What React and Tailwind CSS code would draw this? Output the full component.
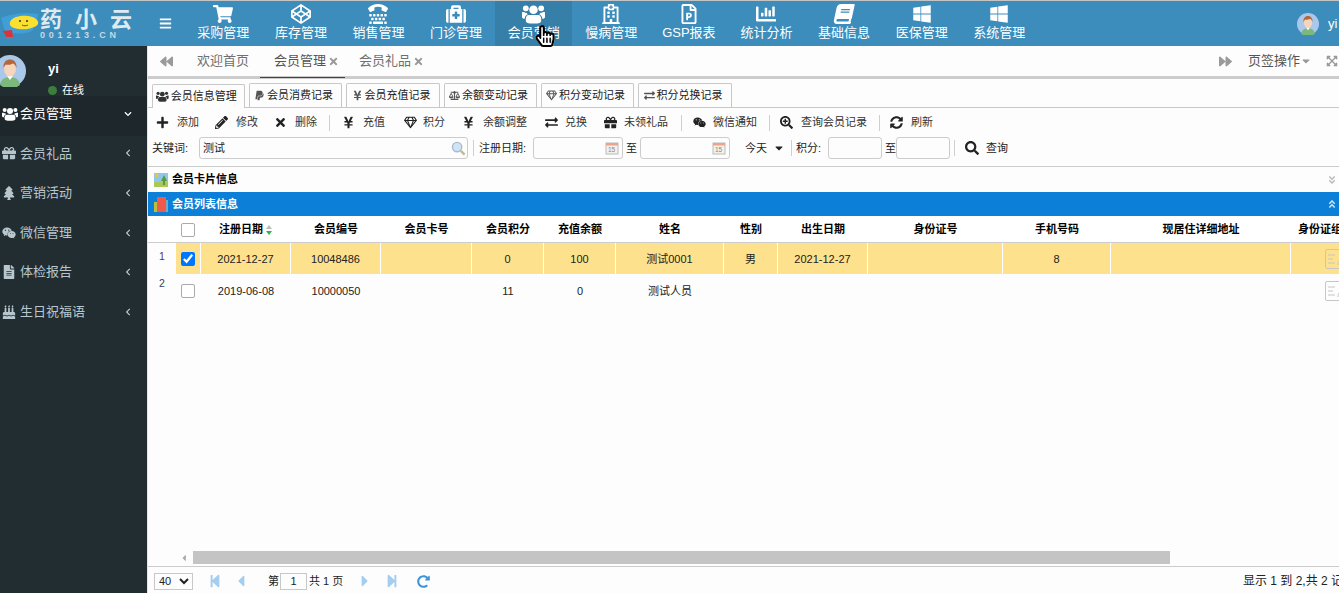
import {
  FaBackward, FaBalanceScale, FaBars, FaBirthdayCake, FaBook, FaCaretDown, FaChartBar, FaChevronDown, FaChevronLeft,
  FaCodepen, FaExchangeAlt, FaExpandArrowsAlt, FaFileAlt, FaForward, FaGift, FaHandPointer, FaMedkit, FaPaypal,
  FaPencilAlt, FaPlus, FaRegFilePowerpoint, FaRegGem, FaRegHandPointer, FaRegHospital, FaSearch, FaSearchPlus,
  FaShoppingCart, FaStepBackward, FaStepForward, FaSyncAlt, FaTimes, FaTree, FaTty, FaWeixin, FaWindows,
  FaYenSign, FaCaretLeft, FaCaretRight, FaRedoAlt, FaAngleDoubleDown, FaAngleDoubleUp,
} from 'react-icons/fa';

// 原图的 users 图标比 fa5 的更高,自己画
function UsersIcon({ className }) {
  return (
    <svg viewBox="0 0 24 20" fill="currentColor" width="1.150em" height="1em" className={className}>
      <circle cx="12" cy="5.500" r="4.500" />
      <circle cx="4" cy="4" r="3" />
      <circle cx="20" cy="4" r="3" />
      <path d="M7 11h10c2 0 3 2 3 4v2c0 2-2 3-8 3s-8-1-8-3v-2c0-2 1-4 3-4z" />
      <path d="M0 8.500C0 8 1 8 2 8c1 .8 2 1 3 1 .3.6.6 1 1 1.300-2 .8-3 2.500-3.200 4.700C1 15 0 14 0 13z" />
      <path d="M24 8.500c0-.5-1-.5-2-.5-1 .8-2 1-3 1-.3.6-.6 1-1 1.300 2 .8 3 2.500 3.200 4.700C23 15 24 14 24 13z" />
    </svg>
  );
}

function SlantBook({ className }) {
  return <FaBook className={`${className} -skew-x-12`} />;
}

const navItems = [
  ['采购管理', FaShoppingCart], ['库存管理', FaCodepen], ['销售管理', FaTty], ['门诊管理', FaMedkit],
  ['会员营销', UsersIcon], ['慢病管理', FaRegHospital], ['GSP报表', FaRegFilePowerpoint], ['统计分析', FaChartBar],
  ['基础信息', SlantBook], ['医保管理', FaWindows], ['系统管理', FaWindows],
];

const sideItems = [
  ['会员管理', UsersIcon], ['会员礼品', FaGift], ['营销活动', FaTree],
  ['微信管理', FaWeixin], ['体检报告', FaFileAlt], ['生日祝福语', FaBirthdayCake],
];

const subTabs = [
  ['会员信息管理', UsersIcon, 'w-[93px]', 'ml-0'], ['会员消费记录', FaPaypal, 'w-[93px]', 'ml-[4px]'],
  ['会员充值记录', FaYenSign, 'w-[94px]', 'ml-[4px]'], ['余额变动记录', FaBalanceScale, 'w-[93px]', 'ml-[4px]'],
  ['积分变动记录', FaRegGem, 'w-[93px]', 'ml-[4px]'], ['积分兑换记录', FaExchangeAlt, 'w-[94px]', 'ml-[4px]'],
];

const tools = [
  { t: '添加', I: FaPlus, cls: 'ml-0', gap: 'gap-[8px]' },
  { t: '修改', I: FaPencilAlt, cls: 'ml-[15px]', gap: 'gap-[8px]' },
  { t: '删除', I: FaTimes, cls: 'ml-[15px]', gap: 'gap-[8px]' },
  { sep: true, cls: 'ml-[12px] mr-[11px]' },
  { t: '充值', I: FaYenSign, cls: 'ml-0', gap: 'gap-[8px]' },
  { t: '积分', I: FaRegGem, cls: 'ml-[18px]', gap: 'gap-[6px]' },
  { t: '余额调整', I: FaYenSign, cls: 'ml-[16px]', gap: 'gap-[8px]' },
  { t: '兑换', I: FaExchangeAlt, cls: 'ml-[17px]', gap: 'gap-[7px]' },
  { t: '未领礼品', I: FaGift, cls: 'ml-[16px]', gap: 'gap-[7px]' },
  { sep: true, cls: 'ml-[13px] mr-[10px]' },
  { t: '微信通知', I: FaWeixin, cls: 'ml-0', gap: 'gap-[7px]' },
  { sep: true, cls: 'ml-[12px] mr-[9px]' },
  { t: '查询会员记录', I: FaSearchPlus, cls: 'ml-0', gap: 'gap-[8px]' },
  { sep: true, cls: 'ml-[12px] mr-[9px]' },
  { t: '刷新', I: FaSyncAlt, cls: 'ml-0', gap: 'gap-[8px]' },
];

const gridCols = 'grid grid-cols-[28px_25px_90px_90px_91px_72px_72px_108px_54px_90px_135px_108px_180px_92px]';
const headers = ['会员编号', '会员卡号', '会员积分', '充值余额', '姓名', '性别', '出生日期', '身份证号', '手机号码', '现居住详细地址'];
const row1 = ['2021-12-27', '10048486', '', '0', '100', '测试0001', '男', '2021-12-27', '', '8', ''];
const row2 = ['2019-06-08', '10000050', '', '11', '0', '测试人员', '', '', '', '', ''];

function Avatar({ className }) {
  return (
    <svg viewBox="0 0 32 32" className={className}>
      <circle cx="16" cy="16" r="16" fill="#a9c8ea" />
      <path d="M6 30c1-6 5-8 10-8s9 2 10 8a16 16 0 0 1-20 0z" fill="#7cb87c" />
      <path d="M13 21h6l-3 4z" fill="#fff" />
      <ellipse cx="16" cy="14" rx="6" ry="7.500" fill="#f6d5bd" />
      <path d="M9.500 13c-.5-6 3-8.500 6.500-8.500s7 2.500 6.500 8.500c-1-3-2.500-4-3.500-4.500-2 1.500-6 1.500-7 1-1 .8-2 2-2.500 3.500z" fill="#b5673c" />
    </svg>
  );
}

function Logo() {
  return (
    <div className="w-[147px] h-full shrink-0 flex items-center overflow-hidden">
      <svg viewBox="0 0 40 30" className="w-[40px] h-[30px] mt-[4px] shrink-0">
        <path d="M1 7C10 3 26 1 38 3l-1 8-5 9c-8 3-14 3-18 2l-3 4-4 1z" fill="#3f9fd8" />
        <path d="M10 11c2-5 10-7 18-6 7 1 11 4 10 8-2 4-12 6-20 5-6-1-9-3-8-7z" fill="#fbe02f" />
        <circle cx="20" cy="10" r="1" fill="#333" />
        <circle cx="27" cy="10" r="1" fill="#333" />
        <path d="M28 14c-2 1-4 1-6 0" stroke="#333" strokeWidth=".8" fill="none" />
        <path d="M2 20l10-1 1 7-7 0-1-3z" fill="#d8343a" />
      </svg>
      <div className="flex flex-col items-start">
        <div className="text-[22px] leading-[23px] font-bold text-[#dfeaf1] tracking-[13px] whitespace-nowrap">药小云</div>
        <div className="text-[9px] leading-[9px] font-bold text-[#c5d8e4] tracking-[3.800px] whitespace-nowrap">001213.CN</div>
      </div>
    </div>
  );
}

function TopBar() {
  return (
    <div className="h-[46px] shrink-0 border-t border-[#c4c4c4] bg-[#3c8dbc] flex text-white relative">
      <Logo />
      <div className="w-[37.500px] shrink-0 flex items-center justify-center">
        <FaBars className="text-[13px]" />
      </div>
      {navItems.map(([label, Icon], i) => (
        <div key={label} className={`w-[77.600px] shrink-0 flex flex-col items-center pt-[3px] ${i === 4 ? 'bg-[#367fa9]' : ''}`}>
          <Icon className="text-[20px] h-[20px]" />
          <span className="text-[13px] leading-[17px] whitespace-nowrap">{label}</span>
        </div>
      ))}
      <div className="ml-auto flex items-center">
        <Avatar className="w-[22px] h-[22px]" />
        <span className="text-[13px] ml-[9px] w-[11px] overflow-hidden">yi</span>
      </div>
      {/* 鼠标指针 */}
      <div className="absolute left-[535px] top-[24px] w-[20px] h-[22px]">
        <FaHandPointer className="absolute inset-0 w-[20px] h-[22px] text-white" />
        <FaRegHandPointer className="absolute inset-0 w-[20px] h-[22px] text-black" />
      </div>
    </div>
  );
}

function Sidebar() {
  return (
    <div className="w-[147px] shrink-0 bg-[#222d32] text-[#b8c7ce]">
      <div className="h-[50px] relative">
        <Avatar className="absolute left-[-6px] top-[9px] w-[32px] h-[32px]" />
        <div className="absolute left-[48px] top-[15px] text-white font-bold text-[13px] leading-[16px]">yi</div>
        <div className="absolute left-[48px] top-[37px] flex items-center text-white text-[11px] leading-[14px]">
          <span className="w-[9px] h-[9px] rounded-full bg-[#3d7d3d] mr-[5px]" />在线
        </div>
      </div>
      {sideItems.map(([label, Icon], i) => (
        <div key={label} className={`h-[39.600px] flex items-center pl-[2px] pr-[15px] pb-[4px] ${i === 0 ? 'bg-[#1e282c] text-white' : ''}`}>
          <span className="w-[18px] shrink-0"><Icon className="text-[14px]" /></span>
          <span className="text-[13px] whitespace-nowrap">{label}</span>
          {i === 0 ? <FaChevronDown className="ml-auto text-[8px]" /> : <FaChevronLeft className="ml-auto text-[8px]" />}
        </div>
      ))}
    </div>
  );
}

function TabBar() {
  return (
    <div className="h-[33px] shrink-0 border-b-[3px] border-[#cccccc] flex items-center text-[13px] text-[#6f6f6f] relative">
      <FaBackward className="ml-[12px] text-[13px] text-[#9a9a9a]" />
      <span className="ml-[24px]">欢迎首页</span>
      <span className="ml-[25px] text-[#555]">会员管理</span>
      <FaTimes className="ml-[2px] text-[11px] text-[#999]" />
      <span className="ml-[20px]">会员礼品</span>
      <FaTimes className="ml-[2px] text-[11px] text-[#999]" />
      <div className="absolute left-[112px] bottom-[-2px] w-[85px] h-px bg-[#2f4661]" />
      <FaForward className="ml-auto text-[13px] text-[#9a9a9a]" />
      <span className="ml-[16px] text-[#555]">页签操作</span>
      <FaCaretDown className="text-[12px] text-[#999]" />
      <FaExpandArrowsAlt className="ml-[14px] mr-px text-[12px] text-[#999]" />
    </div>
  );
}

function SubTabs() {
  return (
    <div className="h-[28px] shrink-0 flex items-end pl-[4px] border-b border-[#c8c8c8] text-[11px] text-[#222]">
      {subTabs.map(([label, Icon, w, ml], i) => (
        <div
          key={label}
          className={`${w} ${ml} h-[24px] pr-[4px] flex items-center justify-center gap-[2px] border border-b-0 border-[#c8c8c8] rounded-t-[2px] whitespace-nowrap ${i === 0 ? 'bg-[#fdfdfd] relative top-px' : ''}`}
        >
          <Icon className={`text-[11px] ${i === 0 ? 'text-[#333]' : 'text-[#555]'}`} />
          {label}
        </div>
      ))}
    </div>
  );
}

function Toolbar() {
  return (
    <div className="h-[29px] shrink-0 flex items-center pl-[7px] text-[11px] text-[#333]">
      {tools.map((item, i) =>
        item.sep ? (
          <span key={i} className={`w-px h-[16px] bg-[#cfcfcf] ${item.cls}`} />
        ) : (
          <span key={i} className={`flex items-center whitespace-nowrap ${item.gap} ${item.cls}`}>
            <span className="w-[14px] flex justify-center text-[#222]"><item.I className="text-[13px]" /></span>
            {item.t}
          </span>
        )
      )}
    </div>
  );
}

function CalendarIcon() {
  return (
    <svg viewBox="0 0 14 14" className="w-[14px] h-[14px] absolute right-[3px] top-[3px]">
      <rect x="1" y="2" width="12" height="11" fill="#f4f1ec" stroke="#bbb" />
      <rect x="1" y="2" width="12" height="2.500" fill="#eda28a" />
      <text x="3" y="11" fontSize="6.500" fill="#888" fontFamily="Liberation Sans">15</text>
    </svg>
  );
}

function Input({ w, ml, children, value }) {
  return (
    <div className={`${w} ${ml} h-[22px] shrink-0 border border-[#cccccc] rounded-[3px] bg-[#fdfdfd] relative flex items-center pl-[3px] text-[11px]`}>
      {value}
      {children}
    </div>
  );
}

function SearchRow() {
  const sep = 'w-px h-[16px] bg-[#cfcfcf] shrink-0';
  return (
    <div className="h-[30px] shrink-0 border-b border-[#cccccc] pb-[7px] flex items-center pl-[4px] text-[11px] text-[#222] whitespace-nowrap">
      <span className="w-[47px] shrink-0">关键词:</span>
      <Input w="w-[269px]" ml="ml-0" value="测试">
        <svg viewBox="0 0 16 16" className="w-[15px] h-[15px] absolute right-[1px] top-[3px]">
          <circle cx="6.500" cy="6.500" r="5" fill="#cfe4f5" stroke="#a9bccb" strokeWidth="1.500" />
          <path d="M10.500 10.500l4 4" stroke="#c9b98a" strokeWidth="2.500" />
        </svg>
      </Input>
      <span className={`${sep} ml-[5px]`} />
      <span className="ml-[5px] w-[54px] shrink-0">注册日期:</span>
      <Input w="w-[90px]" ml="ml-0"><CalendarIcon /></Input>
      <span className="ml-[3px] w-[14px] shrink-0">至</span>
      <Input w="w-[90px]" ml="ml-0"><CalendarIcon /></Input>
      <span className="ml-[15px]">今天</span>
      <FaCaretDown className="ml-[6px] text-[12px] text-[#222]" />
      <span className={`${sep} ml-[6px]`} />
      <span className="ml-[4px] w-[32px] shrink-0">积分:</span>
      <Input w="w-[54px]" ml="ml-0" />
      <span className="ml-[3px] w-[11px] shrink-0">至</span>
      <Input w="w-[54px]" ml="ml-0" />
      <span className={`${sep} ml-[4px]`} />
      <FaSearch className="ml-[10px] text-[14px] text-[#222]" />
      <span className="ml-[7px]">查询</span>
    </div>
  );
}

function SectionBars() {
  return (
    <>
      <div className="h-[25px] shrink-0 flex items-center pl-[6px] pr-[2px] text-[11px] font-bold text-black">
        <svg viewBox="0 0 14 14" className="w-[14px] h-[14px] mr-[4px]">
          <rect width="14" height="14" fill="#8cc8ec" />
          <rect y="9" width="14" height="5" fill="#a8c85a" />
          <circle cx="2.500" cy="2.500" r="2" fill="#f3c23c" />
          <path d="M10 2l3 6h-2v4H9V8H7z" fill="#5a9a3a" />
        </svg>
        会员卡片信息
        <FaAngleDoubleDown className="ml-auto text-[10px] text-[#bbb]" />
      </div>
      <div className="h-[24px] shrink-0 bg-[#0c80d8] flex items-center pl-[6px] pr-[2px] text-[11px] font-bold text-white">
        <svg viewBox="0 0 14 15" className="w-[14px] h-[15px] mr-[4px]">
          <rect x="0" y="5" width="3" height="10" fill="#b5c23a" />
          <rect x="3" y="0" width="9" height="15" fill="#ef5a4a" />
          <rect x="12" y="3" width="2" height="12" fill="#7aa8c8" />
        </svg>
        会员列表信息
        <FaAngleDoubleUp className="ml-auto text-[10px] text-[#cfe4f5]" />
      </div>
    </>
  );
}

function IdCardIcon({ className }) {
  return (
    <svg viewBox="0 0 27 20" className={className} fill="none" stroke="#c6c6c6">
      <rect x="0.500" y="0.500" width="26" height="19" rx="1.500" />
      <path d="M3 6h7M3 10h5M3 14h7M13 16c0-4 1-5 4-5s4 1 4 5M17 4a2.500 2.500 0 1 0 .01 0" />
    </svg>
  );
}

const emptyBox = 'appearance-none w-[14px] h-[14px] border-[1.5px] border-[#aaaaaa] rounded-[2px] bg-white';

function DataRow({ no, cells, checked, h, numCls, textCls }) {
  const cellBg = checked ? 'bg-[#fee18c] border-r border-white' : '';
  return (
    <div className={`${gridCols} ${h} text-[11px] text-[#222]`}>
      <div className={`text-[10.500px] pl-[11px] leading-[14px] ${numCls}`}>{no}</div>
      <div className={`${cellBg} flex items-center justify-center pr-px`}>
        {checked
          ? <input type="checkbox" checked readOnly className="w-[14px] h-[14px]" />
          : <input type="checkbox" checked={false} readOnly className={emptyBox} />}
      </div>
      {cells.map((c, i) => (
        <div key={i} className={`${cellBg} ${textCls} flex items-center justify-center whitespace-nowrap`}>{c}</div>
      ))}
      <div className={`${cellBg} flex items-center pl-[34px]`}>
        <IdCardIcon className="w-[27px] h-[20px] shrink-0" />
      </div>
    </div>
  );
}

function DataTable() {
  return (
    <div className="flex-1 min-h-0 overflow-hidden">
      <div className={`${gridCols} h-[27px] pt-px border-b border-[#cccccc] bg-white text-[11px] font-bold text-black`}>
        <div />
        <div className="flex items-center justify-center pr-px">
          <input type="checkbox" checked={false} readOnly className={emptyBox} />
        </div>
        <div className="flex items-center justify-center whitespace-nowrap">
          注册日期
          <svg viewBox="0 0 8 10" className="w-[8px] h-[10px] ml-[2px]">
            <path d="M4 0l3 4H1z" fill="#bbb" />
            <path d="M4 10L1 6h6z" fill="#2fb344" />
          </svg>
        </div>
        {headers.map((h) => (
          <div key={h} className="flex items-center justify-center whitespace-nowrap">{h}</div>
        ))}
        <div className="flex items-center pl-[7px] whitespace-nowrap">身份证组图</div>
      </div>
      <DataRow no="1" cells={row1} checked h="h-[31px]" numCls="pt-[6px] text-[#5b2d7a]" textCls="pt-[2px]" />
      <DataRow no="2" cells={row2} checked={false} h="h-[34px]" numCls="pt-[2px] text-[#34406b]" textCls="" />
    </div>
  );
}

function Pager() {
  return (
    <div className="h-[27px] shrink-0 border-t border-[#cccccc] pt-[2px] flex items-center pl-[6px] text-[11px] text-[#222] whitespace-nowrap">
      <select className="w-[39px] h-[17px] border border-[#c8c8c8] text-[11px] shrink-0" defaultValue="40">
        <option value="40">40</option>
      </select>
      <FaStepBackward className="ml-[15px] text-[14px] text-[#a5cdf0]" />
      <FaCaretLeft className="ml-[10px] text-[18px] text-[#a5cdf0]" />
      <span className="ml-[18px]">第</span>
      <span className="ml-px w-[27px] h-[17px] border border-[#c8c8c8] flex items-center justify-center text-[11px]">1</span>
      <span className="ml-[2px]">共 1 页</span>
      <FaCaretRight className="ml-[13px] text-[18px] text-[#a5cdf0]" />
      <FaStepForward className="ml-[11px] text-[14px] text-[#a5cdf0]" />
      <FaRedoAlt className="ml-[18px] text-[13px] text-[#3f94d8]" />
      <span className="ml-auto w-[96px] shrink-0 overflow-hidden text-[12px]">显示 1 到 2,共 2 记录</span>
    </div>
  );
}

export default function App() {
  return (
    <div className="w-[1339px] h-[593px] overflow-hidden flex flex-col bg-[#fdfdfd] [font-family:'Liberation_Sans','Noto_Sans_CJK_SC',sans-serif]">
      <TopBar />
      <div className="flex-1 min-h-0 flex">
        <Sidebar />
        <div className="flex-1 min-w-0 flex flex-col border-l border-[#e4e4e4]">
          <TabBar />
          <div className="h-[1px] shrink-0" />
          <SubTabs />
          <Toolbar />
          <SearchRow />
          <SectionBars />
          <DataTable />
          <div className="h-[15px] shrink-0 flex items-start pl-[31px]">
            <FaCaretLeft className="text-[10px] text-[#aaa] mt-[2px]" />
            <div className="ml-[4px] w-[977px] h-[13px] bg-[#c4c4c4]" />
          </div>
          <Pager />
        </div>
      </div>
    </div>
  );
}
